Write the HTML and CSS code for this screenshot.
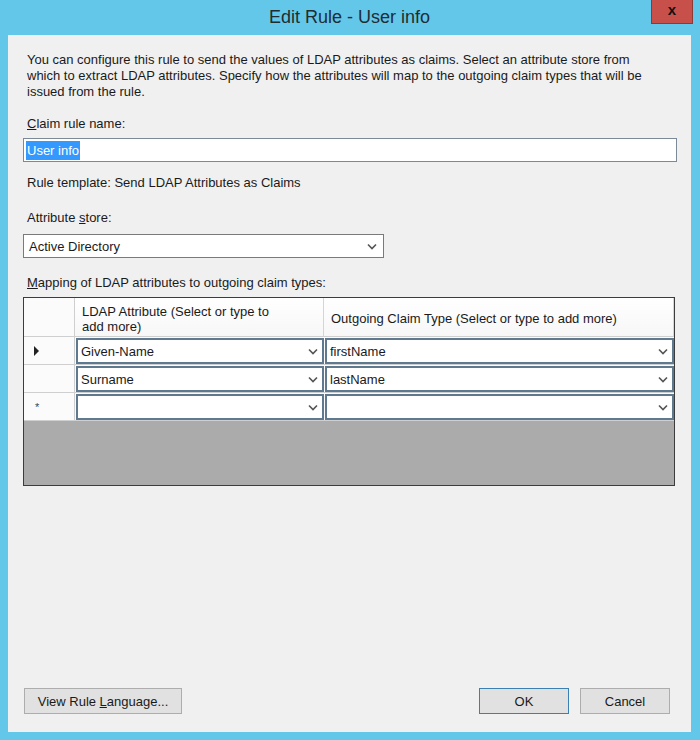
FILE: index.html
```html
<!DOCTYPE html>
<html>
<head>
<meta charset="utf-8">
<link rel="stylesheet" href="styles.css">
</head>
<body>
<div class="window">
  <div class="titlebar">
    <span class="title">Edit Rule - User info</span>
    <div class="close">x</div>
  </div>
  <div class="content">
    <p class="intro">You can configure this rule to send the values of LDAP attributes as claims. Select an attribute store from<br>which to extract LDAP attributes. Specify how the attributes will map to the outgoing claim types that will be<br>issued from the rule.</p>

    <div class="label l-name"><u>C</u>laim rule name:</div>
    <div class="textbox"><span class="sel">User info</span></div>

    <div class="label l-template">Rule template: Send LDAP Attributes as Claims</div>

    <div class="label l-store">Attribute <u>s</u>tore:</div>
    <div class="select">
      <span>Active Directory</span>
      <svg class="chev" width="10" height="7" viewBox="0 0 10 7"><path d="M1 1.5 L5 5.5 L9 1.5" fill="none" stroke="#555" stroke-width="1.6"/></svg>
    </div>

    <div class="label l-map"><u>M</u>apping of LDAP attributes to outgoing claim types:</div>
    <div class="grid">
      <div class="grow head">
        <div class="rh"></div>
        <div class="hc c1">LDAP Attribute (Select or type to<br>add more)</div>
        <div class="hc c2">Outgoing Claim Type (Select or type to add more)</div>
      </div>
      <div class="grow">
        <div class="rh"><span class="tri"></span></div>
        <div class="dc c1"><div class="combo"><span>Given-Name</span><svg class="chev" width="10" height="7" viewBox="0 0 10 7"><path d="M1 1.5 L5 5.5 L9 1.5" fill="none" stroke="#555" stroke-width="1.6"/></svg></div></div>
        <div class="dc c2"><div class="combo"><span>firstName</span><svg class="chev" width="10" height="7" viewBox="0 0 10 7"><path d="M1 1.5 L5 5.5 L9 1.5" fill="none" stroke="#555" stroke-width="1.6"/></svg></div></div>
      </div>
      <div class="grow">
        <div class="rh"></div>
        <div class="dc c1"><div class="combo"><span>Surname</span><svg class="chev" width="10" height="7" viewBox="0 0 10 7"><path d="M1 1.5 L5 5.5 L9 1.5" fill="none" stroke="#555" stroke-width="1.6"/></svg></div></div>
        <div class="dc c2"><div class="combo"><span>lastName</span><svg class="chev" width="10" height="7" viewBox="0 0 10 7"><path d="M1 1.5 L5 5.5 L9 1.5" fill="none" stroke="#555" stroke-width="1.6"/></svg></div></div>
      </div>
      <div class="grow">
        <div class="rh"><span class="star">*</span></div>
        <div class="dc c1"><div class="combo"><span></span><svg class="chev" width="10" height="7" viewBox="0 0 10 7"><path d="M1 1.5 L5 5.5 L9 1.5" fill="none" stroke="#555" stroke-width="1.6"/></svg></div></div>
        <div class="dc c2"><div class="combo"><span></span><svg class="chev" width="10" height="7" viewBox="0 0 10 7"><path d="M1 1.5 L5 5.5 L9 1.5" fill="none" stroke="#555" stroke-width="1.6"/></svg></div></div>
      </div>
      <div class="gfill"></div>
    </div>

    <div class="spacer"></div>

    <div class="buttons">
      <button class="btn btn-view">View Rule <u>L</u>anguage...</button>
      <div class="right">
        <button class="btn btn-ok">OK</button>
        <button class="btn btn-cancel">Cancel</button>
      </div>
    </div>
  </div>
</div>
</body>
</html>
```

FILE: styles.css
```css
html, body {
  margin: 0;
  padding: 0;
}
body {
  width: 700px;
  height: 740px;
  overflow: hidden;
  font-family: "Liberation Sans", Arial, sans-serif;
  font-size: 13px;
  color: #1a1a1a;
}
.window {
  width: 700px;
  height: 740px;
  box-sizing: border-box;
  background: #63c7e9;
  padding: 0 9px 8px 8px;
  display: flex;
  flex-direction: column;
}
.titlebar {
  height: 35px;
  position: relative;
  display: flex;
  align-items: center;
  justify-content: center;
}
.title {
  font-size: 18px;
  color: #1f2d33;
  margin-left: 0;
}
.close {
  position: absolute;
  top: 0;
  right: -2px;
  width: 42px;
  height: 24px;
  background: #c7504b;
  border: 1px solid #8a3a37;
  border-top: none;
  box-sizing: border-box;
  color: #111;
  font-weight: bold;
  font-size: 15px;
  text-align: center;
  line-height: 19px;
}
.content {
  flex: 1;
  background: #f0f0f0;
  padding: 17px 16px 18px 15px;
  display: flex;
  flex-direction: column;
}
.intro {
  margin: 0;
  padding-left: 4px;
  line-height: 16px;
  white-space: nowrap;
}
.label {
  padding-left: 4px;
  line-height: 16px;
}
.l-name { margin-top: 16px; }
.l-template { margin-top: 13px; }
.l-store { margin-top: 19px; }
.l-map { margin-top: 17px; }
.textbox {
  margin-top: 6px;
  height: 24px;
  width: 654px;
  box-sizing: border-box;
  border: 1px solid #7a8a99;
  background: #fff;
  display: flex;
  align-items: center;
  padding-left: 2px;
}
.sel {
  background: #3399ff;
  color: #fff;
  padding: 2px 1px;
  line-height: 15px;
}
.select {
  margin-top: 8px;
  height: 24px;
  width: 361px;
  box-sizing: border-box;
  border: 1px solid #7a7a7a;
  background: #fff;
  display: flex;
  align-items: center;
  justify-content: space-between;
  padding: 0 6px 0 5px;
}
.chev { display: block; }
.grid {
  margin-top: 6px;
  width: 652px;
  height: 189px;
  box-sizing: border-box;
  border: 1px solid #3c3c3c;
  background: #ababab;
  display: flex;
  flex-direction: column;
}
.grow {
  display: flex;
  height: 28px;
}
.grow.head {
  height: 39px;
}
.rh {
  width: 51px;
  box-sizing: border-box;
  background: #fbfbfb;
  border-right: 1px solid #cfcfcf;
  border-bottom: 1px solid #cfcfcf;
  display: flex;
  align-items: center;
  padding-left: 10px;
}
.c1 { width: 249px; }
.c2 { width: 350px; }
.hc {
  box-sizing: border-box;
  background: linear-gradient(#ffffff, #f7f7f7);
  border-right: 1px solid #d5d5d5;
  border-bottom: 1px solid #cfcfcf;
  display: flex;
  align-items: center;
  padding-left: 7px;
  line-height: 15px;
  padding-top: 3px;
}
.dc {
  box-sizing: border-box;
  padding: 1px 0 0 1px;
  background: #fbfbfb;
  border-bottom: 1px solid #cfcfcf;
}
.combo {
  height: 26px;
  box-sizing: border-box;
  border: 2px solid #5f7a8e;
  background: #fff;
  display: flex;
  align-items: center;
  justify-content: space-between;
  padding: 0 4px 0 3px;
}
.tri {
  width: 0;
  height: 0;
  border-top: 5px solid transparent;
  border-bottom: 5px solid transparent;
  border-left: 5px solid #222;
}
.star {
  font-size: 11px;
  color: #444;
  padding-left: 1px;
}
.gfill { flex: 1; }
.spacer { flex: 1; }
.buttons {
  display: flex;
  justify-content: space-between;
  align-items: center;
  padding-left: 1px;
  padding-right: 5px;
}
.right {
  display: flex;
  gap: 11px;
}
.btn {
  font-family: "Liberation Sans", Arial, sans-serif;
  font-size: 13px;
  color: #1a1a1a;
  height: 26px;
  background: #e1e1e1;
  border: 1px solid #adadad;
  padding: 0;
  margin: 0;
}
.btn-view { width: 158px; }
.btn-ok { width: 90px; border-color: #3c7fb1; }
.btn-cancel { width: 90px; }
```
